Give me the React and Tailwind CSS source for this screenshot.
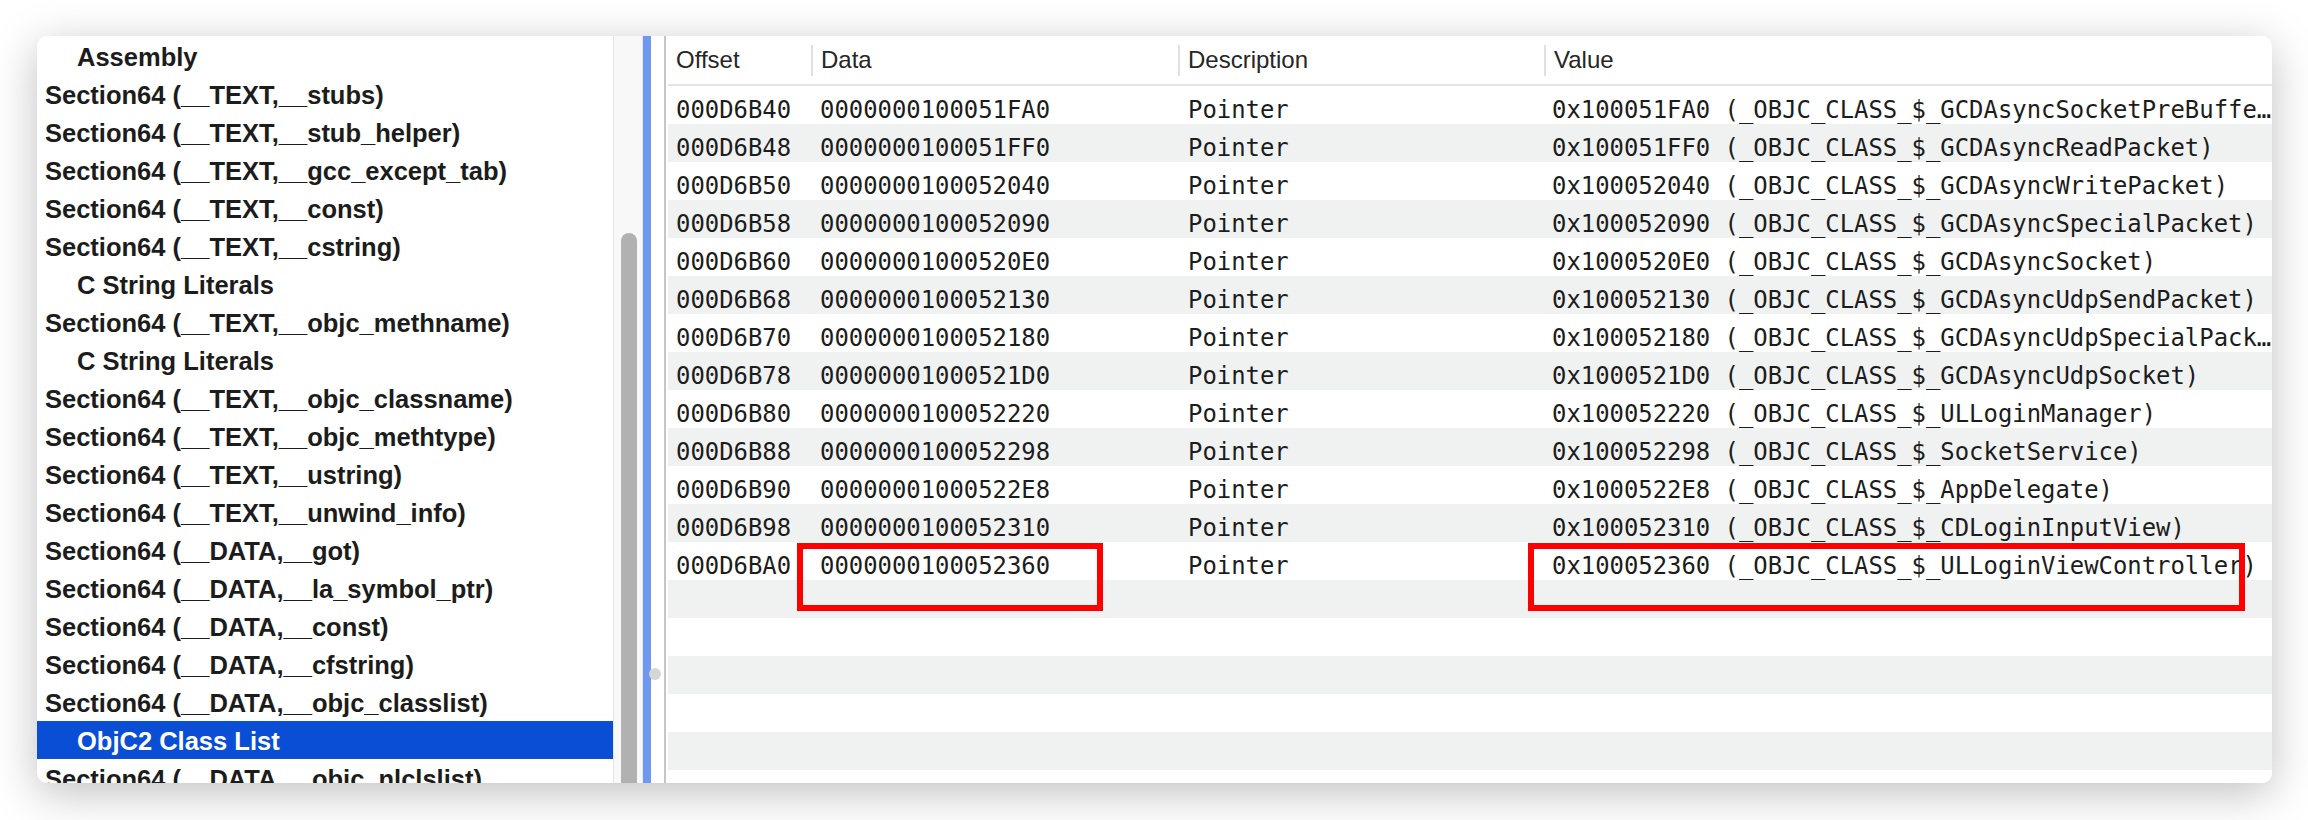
import React from 'react';

const sections = [
  { label: 'Assembly', sub: true },
  { label: 'Section64 (__TEXT,__stubs)' },
  { label: 'Section64 (__TEXT,__stub_helper)' },
  { label: 'Section64 (__TEXT,__gcc_except_tab)' },
  { label: 'Section64 (__TEXT,__const)' },
  { label: 'Section64 (__TEXT,__cstring)' },
  { label: 'C String Literals', sub: true },
  { label: 'Section64 (__TEXT,__objc_methname)' },
  { label: 'C String Literals', sub: true },
  { label: 'Section64 (__TEXT,__objc_classname)' },
  { label: 'Section64 (__TEXT,__objc_methtype)' },
  { label: 'Section64 (__TEXT,__ustring)' },
  { label: 'Section64 (__TEXT,__unwind_info)' },
  { label: 'Section64 (__DATA,__got)' },
  { label: 'Section64 (__DATA,__la_symbol_ptr)' },
  { label: 'Section64 (__DATA,__const)' },
  { label: 'Section64 (__DATA,__cfstring)' },
  { label: 'Section64 (__DATA,__objc_classlist)' },
  { label: 'ObjC2 Class List', sub: true, selected: true },
  { label: 'Section64 (__DATA,__objc_nlclslist)' },
];

const rows = [
  ['000D6B40', '0000000100051FA0', '0x100051FA0 (_OBJC_CLASS_$_GCDAsyncSocketPreBuffe…'],
  ['000D6B48', '0000000100051FF0', '0x100051FF0 (_OBJC_CLASS_$_GCDAsyncReadPacket)'],
  ['000D6B50', '0000000100052040', '0x100052040 (_OBJC_CLASS_$_GCDAsyncWritePacket)'],
  ['000D6B58', '0000000100052090', '0x100052090 (_OBJC_CLASS_$_GCDAsyncSpecialPacket)'],
  ['000D6B60', '00000001000520E0', '0x1000520E0 (_OBJC_CLASS_$_GCDAsyncSocket)'],
  ['000D6B68', '0000000100052130', '0x100052130 (_OBJC_CLASS_$_GCDAsyncUdpSendPacket)'],
  ['000D6B70', '0000000100052180', '0x100052180 (_OBJC_CLASS_$_GCDAsyncUdpSpecialPack…'],
  ['000D6B78', '00000001000521D0', '0x1000521D0 (_OBJC_CLASS_$_GCDAsyncUdpSocket)'],
  ['000D6B80', '0000000100052220', '0x100052220 (_OBJC_CLASS_$_ULLoginManager)'],
  ['000D6B88', '0000000100052298', '0x100052298 (_OBJC_CLASS_$_SocketService)'],
  ['000D6B90', '00000001000522E8', '0x1000522E8 (_OBJC_CLASS_$_AppDelegate)'],
  ['000D6B98', '0000000100052310', '0x100052310 (_OBJC_CLASS_$_CDLoginInputView)'],
  ['000D6BA0', '0000000100052360', '0x100052360 (_OBJC_CLASS_$_ULLoginViewController)'],
];

const EMPTY_ROWS = 6;

function SectionList() {
  return (
    <div className="w-[576px] shrink-0 flex flex-col pt-[1px] overflow-hidden font-['Liberation_Sans',Arial,sans-serif]">
      {sections.map((s, i) => (
        <div
          key={i}
          className={
            'h-[38px] shrink-0 flex items-center pt-[3px] whitespace-nowrap text-[25.5px] font-bold ' +
            (s.sub ? 'pl-[40px] ' : 'pl-[8px] ') +
            (s.selected ? 'bg-[#0a4ed6] text-white' : 'text-[#1c1c1c]')
          }
        >
          {s.label}
        </div>
      ))}
    </div>
  );
}

function HeaderCell({ label, width, first }) {
  return (
    <div className={'h-full flex items-center shrink-0 ' + width}>
      {!first && <div className="w-[2px] h-[31px] bg-[#e0e0e0]" />}
      <span className="pl-[8px]">{label}</span>
    </div>
  );
}

function DataTable() {
  const all = [...rows, ...Array.from({ length: EMPTY_ROWS }, () => null)];
  return (
    <div className="flex-1 ml-[2px] flex flex-col overflow-hidden">
      <div className="h-[50px] shrink-0 flex border-b-2 border-[#e3e3e3] text-[24px] text-[#262626] font-['Liberation_Sans',Arial,sans-serif]">
        <HeaderCell label="Offset" width="w-[143px]" first />
        <HeaderCell label="Data" width="w-[367px]" />
        <HeaderCell label="Description" width="w-[366px]" />
        <HeaderCell label="Value" width="flex-1" />
      </div>
      <div className="flex flex-col font-['DejaVu_Sans_Mono','Liberation_Mono',monospace] text-[23.9px] text-[#1c1c1c]">
        {all.map((r, i) => (
          <div
            key={i}
            className={'h-[38px] shrink-0 flex items-center pt-[12px] whitespace-nowrap ' + (i % 2 === 1 ? 'bg-[#f0f1f1]' : 'bg-white')}
          >
            {r && (
              <>
                <div className="w-[143px] shrink-0 pl-[8px]">{r[0]}</div>
                <div className="w-[367px] shrink-0 pl-[9px]">{r[1]}</div>
                <div className="w-[366px] shrink-0 pl-[10px]">Pointer</div>
                <div className="flex-1 min-w-0 pl-[8px] overflow-hidden">{r[2]}</div>
              </>
            )}
          </div>
        ))}
      </div>
    </div>
  );
}

export default function App() {
  return (
    <div className="relative w-[2308px] h-[820px] bg-white pl-[37px] pt-[36px] overflow-hidden">
      <div className="w-[2235px] h-[747px] flex rounded-[10px] overflow-hidden bg-white shadow-[0_10px_45px_rgba(0,0,0,0.25)]">
        <SectionList />
        {/* scroll track */}
        <div className="w-[30px] shrink-0 flex flex-col bg-[#f8f8f8] border-l border-[#e4e4e4] border-r border-r-[#e6e6e6]">
          <div className="mt-[197px] ml-[7px] w-[16px] flex-1 rounded-t-full bg-[#b1b1b1]" />
        </div>
        <div className="w-[8px] shrink-0 bg-[#6f98f2]" />
        <div className="w-[13px] shrink-0 flex flex-col">
          <div className="mt-[632px] -ml-[2px] w-[12px] h-[12px] rounded-full bg-[#d6d6d6]" />
        </div>
        <div className="w-[2px] shrink-0 bg-[#c6c6c6]" />
        <DataTable />
      </div>
      {/* annotation boxes */}
      <div className="absolute left-[797px] top-[543px] w-[306px] h-[68px] border-[6px] border-[#ff0000]" />
      <div className="absolute left-[1528px] top-[543px] w-[717px] h-[68px] border-[6px] border-[#ff0000]" />
    </div>
  );
}
